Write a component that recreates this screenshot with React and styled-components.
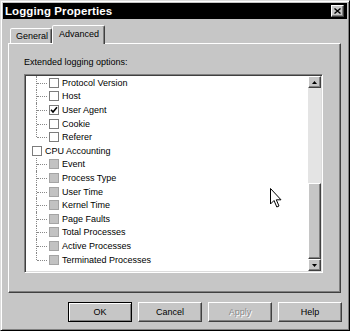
import styled, { createGlobalStyle, css } from "styled-components";

const items = [
	{ label: "Protocol Version", level: 1 },
	{ label: "Host", level: 1 },
	{ label: "User Agent", level: 1, checked: true },
	{ label: "Cookie", level: 1 },
	{ label: "Referer", level: 1, last: true },
	{ label: "CPU Accounting", level: 0 },
	{ label: "Event", level: 1, disabled: true },
	{ label: "Process Type", level: 1, disabled: true },
	{ label: "User Time", level: 1, disabled: true },
	{ label: "Kernel Time", level: 1, disabled: true },
	{ label: "Page Faults", level: 1, disabled: true },
	{ label: "Total Processes", level: 1, disabled: true },
	{ label: "Active Processes", level: 1, disabled: true },
	{ label: "Terminated Processes", level: 1, disabled: true, last: true },
];

const GlobalStyle = createGlobalStyle`
	body {
		margin: 0;
		background: #fff;
		font-family: "Liberation Sans", Arial, sans-serif;
	}
`;

const Window = styled.div`
	position: relative;
	box-sizing: border-box;
	width: 350px;
	height: 331px;
	padding: 2px;
	background: #c6c6c6;
	border: 1px solid;
	border-color: #dcdcdc #000 #000 #dcdcdc;
	box-shadow: inset 1px 1px #fff, inset -1px -1px #808080;
	display: flex;
	flex-direction: column;
`;

const TitleBar = styled.div`
	height: 16px;
	background: #000;
	display: flex;
	align-items: center;
	justify-content: space-between;
	padding: 0 3px 0 2px;
	color: #fff;
	font-size: 11.5px;
	font-weight: bold;
	letter-spacing: 0.1px;
`;

const raised = css`
	background: #c6c6c6;
	border: 1px solid;
	border-color: #fff #404040 #404040 #fff;
	box-shadow: inset -1px -1px #808080;
`;

const CloseButton = styled.div`
	${raised};
	box-sizing: border-box;
	width: 13px;
	height: 12px;
	display: flex;
	align-items: center;
	justify-content: center;
`;

const TabStrip = styled.div`
	display: flex;
	align-items: flex-end;
	height: 19px;
	margin-top: 5px;
	padding-left: 7px;
	position: relative;
	z-index: 1;
`;

const Tab = styled.div`
	box-sizing: border-box;
	width: ${(p) => p.width}px;
	height: ${(p) => (p.active ? 19 : 15)}px;
	margin-bottom: ${(p) => (p.active ? -1 : 0)}px;
	background: #c6c6c6;
	border: 1px solid;
	border-bottom: none;
	border-color: #fff #404040 transparent #fff;
	border-radius: 2px 2px 0 0;
	box-shadow: inset -1px 0 #808080;
	font-size: 9px;
	color: #000;
	display: flex;
	align-items: ${(p) => (p.active ? "flex-start" : "center")};
	padding: ${(p) => (p.active ? "3px 0 0 6px" : "0 0 0 5px")};
`;

const Panel = styled.div`
	box-sizing: border-box;
	height: 250px;
	margin: 0 6px 0 5px;
	border: 1px solid;
	border-color: #fff #404040 #404040 #fff;
	box-shadow: inset -1px -1px #808080;
	padding: 13px 0 0 15px;
`;

const Label = styled.div`
	font-size: 9px;
	line-height: 11px;
	color: #000;
`;

const ListBox = styled.div`
	box-sizing: border-box;
	width: 299px;
	height: 199px;
	margin-top: 6px;
	border: 1px solid;
	border-color: #808080 #fff #fff #808080;
	box-shadow: inset 1px 1px #404040, inset -1px -1px #dcdcdc;
	padding: 1px;
	display: flex;
	background: #fff;
`;

const Rows = styled.div`
	flex: 1;
	overflow: hidden;
	background: #fff;
`;

const Row = styled.div`
	height: 13.6px;
	display: flex;
	align-items: center;
	padding-left: ${(p) => (p.level ? 10 : 6)}px;
	font-size: 9px;
	color: #000;
	white-space: nowrap;
`;

const Connector = styled.span`
	position: relative;
	align-self: stretch;
	width: 12px;
	margin-right: 1px;

	&::before {
		content: "";
		position: absolute;
		left: 0;
		top: 0;
		bottom: ${(p) => (p.last ? "50%" : "0")};
		border-left: 1px dotted #888;
	}
	&::after {
		content: "";
		position: absolute;
		left: 1px;
		top: 50%;
		width: 10px;
		border-top: 1px dotted #888;
	}
`;

const Box = styled.span`
	box-sizing: border-box;
	width: 10px;
	height: 10px;
	margin-right: 3px;
	border: 1px solid ${(p) => (p.disabled ? "#a4a4a4" : "#7c7c7c")};
	background: ${(p) => (p.disabled ? "#c2c2c2" : "#fff")};
	display: flex;
	align-items: center;
	justify-content: center;
`;

const ScrollBar = styled.div`
	width: 13px;
	display: flex;
	flex-direction: column;
	background: #e6e6e6;
`;

const ArrowButton = styled.div`
	${raised};
	box-sizing: border-box;
	height: 12px;
	display: flex;
	align-items: center;
	justify-content: center;
`;

const Track = styled.div`
	flex: 1;
	display: flex;
	flex-direction: column;
	justify-content: flex-end;
	background: #e4e4e4;
`;

const Thumb = styled.div`
	${raised};
	box-sizing: border-box;
	height: 76px;
`;

const ButtonRow = styled.div`
	display: flex;
	justify-content: flex-end;
	gap: 6px;
	margin: 9px 5px 0 0;
`;

const Button = styled.div`
	${raised};
	box-sizing: border-box;
	width: 64px;
	height: 20px;
	display: flex;
	align-items: center;
	justify-content: center;
	font-size: 9px;
	color: ${(p) => (p.disabled ? "#8a8a8a" : "#000")};
	text-shadow: ${(p) => (p.disabled ? "1px 1px #fff" : "none")};
	${(p) =>
		p.primary &&
		css`
			border-color: #000;
			box-shadow: inset 1px 1px #fff, inset -1px -1px #808080;
		`}
`;

const Cursor = styled.svg`
	position: absolute;
	left: 269px;
	top: 187px;
`;

const Check = () => (
	<svg width="8" height="8" viewBox="0 0 8 8">
		<path d="M1 3.8 L3 6 L7 1.2" fill="none" stroke="#000" strokeWidth="1.6" />
	</svg>
);

const App = () => {
	return (
		<>
			<GlobalStyle />
			<Window>
				<TitleBar>
					<span>Logging Properties</span>
					<CloseButton>
						<svg width="7" height="6" viewBox="0 0 7 6">
							<path d="M0.5 0.5 L6.5 5.5 M6.5 0.5 L0.5 5.5" stroke="#000" strokeWidth="1.4" />
						</svg>
					</CloseButton>
				</TitleBar>
				<TabStrip>
					<Tab width={42}>General</Tab>
					<Tab width={53} active>
						Advanced
					</Tab>
				</TabStrip>
				<Panel>
					<Label>Extended logging options:</Label>
					<ListBox>
						<Rows>
							{items.map((item) => (
								<Row key={item.label} level={item.level}>
									{item.level > 0 && <Connector last={item.last} />}
									<Box disabled={item.disabled}>{item.checked && <Check />}</Box>
									{item.label}
								</Row>
							))}
						</Rows>
						<ScrollBar>
							<ArrowButton>
								<svg width="5" height="3" viewBox="0 0 5 3">
									<path d="M2.5 0 L5 3 L0 3 Z" fill="#000" />
								</svg>
							</ArrowButton>
							<Track>
								<Thumb />
							</Track>
							<ArrowButton>
								<svg width="5" height="3" viewBox="0 0 5 3">
									<path d="M0 0 L5 0 L2.5 3 Z" fill="#000" />
								</svg>
							</ArrowButton>
						</ScrollBar>
					</ListBox>
				</Panel>
				<ButtonRow>
					<Button primary>OK</Button>
					<Button>Cancel</Button>
					<Button disabled>Apply</Button>
					<Button>Help</Button>
				</ButtonRow>
				<Cursor width="13" height="21" viewBox="0 0 13 21">
					<path
						d="M0.5 0.5 L0.5 16 L4 12.5 L6.8 19 L9 18 L6.3 11.8 L11 11.8 Z"
						fill="#fff"
						stroke="#000"
						strokeWidth="1"
						strokeLinejoin="miter"
					/>
				</Cursor>
			</Window>
		</>
	);
};

export default App;
